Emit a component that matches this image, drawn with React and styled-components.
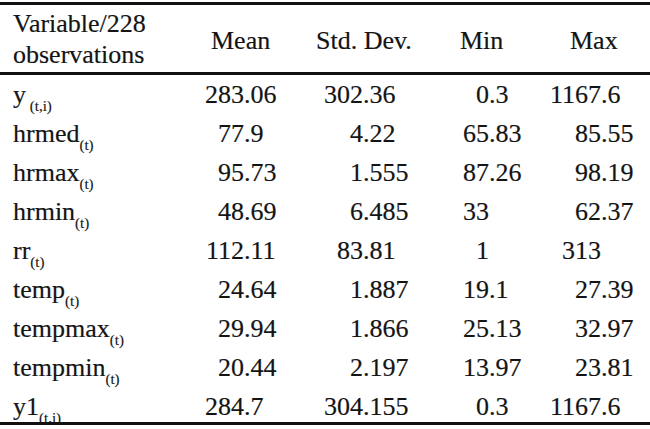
import React from "react";
import styled, { createGlobalStyle, css } from "styled-components";

const GlobalStyle = createGlobalStyle`
  html, body {
    margin: 0;
    padding: 0;
    background: #ffffff;
    color: #141414;
  }
`;

const serif = css`
  font-family: "Liberation Serif", "Times New Roman", serif;
  font-size: 26px;
  -webkit-text-stroke: 0.18px #141414;
`;

const COLUMNS = [
  { key: "mean", label: "Mean", width: 120, indent: 21, intWidth: 54 },
  { key: "sd", label: "Std. Dev.", width: 120, indent: 6, intWidth: 53 },
  { key: "min", label: "Min", width: 110, indent: 30, intWidth: 59 },
  { key: "max", label: "Max", width: 110, indent: 30, intWidth: 61 },
];

const TEMPLATE = `190px ${COLUMNS.map((c) => `${c.width}px`).join(" ")}`;

const ROWS = [
  { name: "y", sub: "\u00a0(t,i)", mean: "283.06", sd: "302.36", min: "0.3", max: "1167.6" },
  { name: "hrmed", sub: "(t)", mean: "77.9", sd: "4.22", min: "65.83", max: "85.55" },
  { name: "hrmax", sub: "(t)", mean: "95.73", sd: "1.555", min: "87.26", max: "98.19" },
  { name: "hrmin", sub: "(t)", mean: "48.69", sd: "6.485", min: "33", max: "62.37" },
  { name: "rr", sub: "(t)", mean: "112.11", sd: "83.81", min: "1", max: "313" },
  { name: "temp", sub: "(t)", mean: "24.64", sd: "1.887", min: "19.1", max: "27.39" },
  { name: "tempmax", sub: "(t)", mean: "29.94", sd: "1.866", min: "25.13", max: "32.97" },
  { name: "tempmin", sub: "(t)", mean: "20.44", sd: "2.197", min: "13.97", max: "23.81" },
  { name: "y1", sub: "(t,i)", mean: "284.7", sd: "304.155", min: "0.3", max: "1167.6" },
];

const Table = styled.div`
  ${serif};
  width: 650px;
  margin-top: 2px;
  border-top: 3px solid #111;
  border-bottom: 3px solid #111;
`;

const HeaderRow = styled.div`
  display: grid;
  grid-template-columns: ${TEMPLATE};
  height: 64px;
  padding-top: 3px;
  border-bottom: 3px solid #111;
  line-height: 31px;
`;

const HeadLabel = styled.div`
  align-self: start;
  padding-left: 13px;
  white-space: nowrap;
`;

const HeadCell = styled.div`
  align-self: center;
  padding-left: ${(p) => p.$indent}px;
  white-space: nowrap;
`;

const BodyRow = styled.div`
  display: grid;
  grid-template-columns: ${TEMPLATE};
  height: 39px;
  line-height: 39px;
  &:last-child {
    height: 35px;
  }
`;

const NameCell = styled.div`
  padding-left: 13px;
  white-space: nowrap;
`;

const Sub = styled.span`
  font-size: 15px;
  line-height: 1;
  vertical-align: -8px;
  -webkit-text-stroke: 0.12px #141414;
`;

const NumCell = styled.div`
  display: flex;
  white-space: nowrap;
`;

const IntPart = styled.span`
  width: ${(p) => p.$width}px;
  text-align: right;
  flex: none;
`;

const FracPart = styled.span`
  flex: none;
`;

function Num({ value, intWidth }) {
  const dot = value.indexOf(".");
  const int = dot === -1 ? value : value.slice(0, dot);
  const frac = dot === -1 ? "" : value.slice(dot);
  return (
    <NumCell>
      <IntPart $width={intWidth}>{int}</IntPart>
      <FracPart>{frac}</FracPart>
    </NumCell>
  );
}

export default function App() {
  return (
    <>
      <GlobalStyle />
      <Table>
        <HeaderRow>
          <HeadLabel>
            Variable/228
            <br />
            observations
          </HeadLabel>
          {COLUMNS.map((c) => (
            <HeadCell key={c.key} $indent={c.indent}>
              {c.label}
            </HeadCell>
          ))}
        </HeaderRow>
        {ROWS.map((r) => (
          <BodyRow key={r.name}>
            <NameCell>
              {r.name}
              <Sub>{r.sub}</Sub>
            </NameCell>
            {COLUMNS.map((c) => (
              <Num key={c.key} value={r[c.key]} intWidth={c.intWidth} />
            ))}
          </BodyRow>
        ))}
      </Table>
    </>
  );
}
